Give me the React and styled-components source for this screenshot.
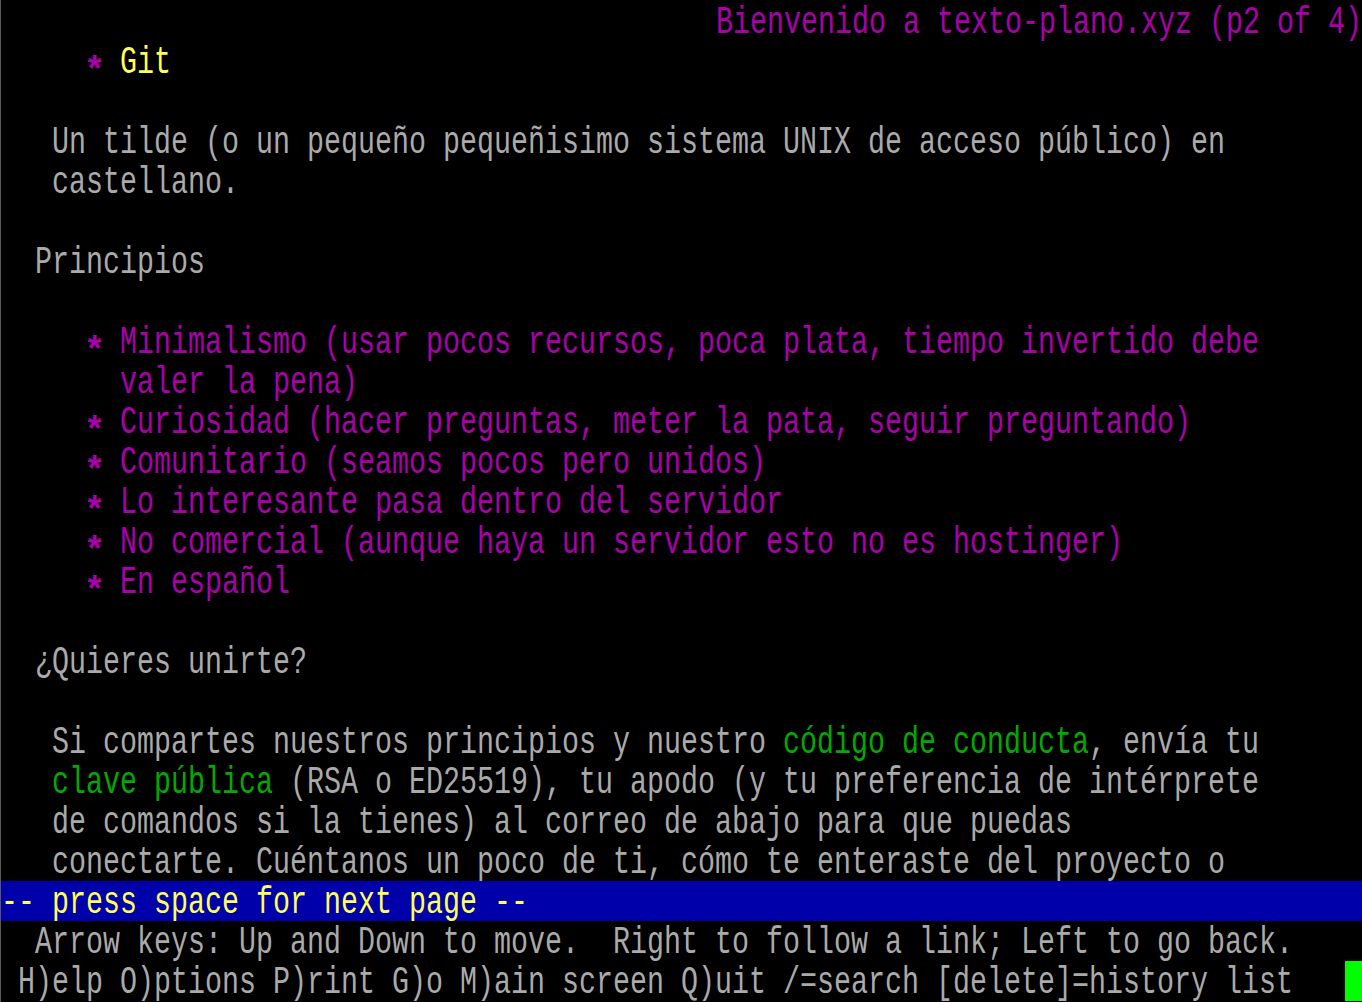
import React from 'react'
import styled, { createGlobalStyle } from 'styled-components'

const Global = createGlobalStyle`
    html, body {
        margin: 0;
        padding: 0;
        background: #000;
    }
`

const colors = {
    gray: '#aaaaaa',
    magenta: '#aa00aa',
    yellow: '#ffff55',
    green: '#00aa00',
}

const Screen = styled.div`
    width: 1362px;
    height: 1002px;
    box-sizing: border-box;
    border-left: 1px solid #5a5a5a;
    background: #000;
    padding-top: 1px;
    display: flex;
    flex-direction: column;
    overflow: hidden;
    font-family: "Liberation Mono", "DejaVu Sans Mono", monospace;
    font-size: 28.33px;
`

const Row = styled.div`
    height: 40px;
    flex: none;
    line-height: 40px;
    white-space: pre;
    display: flex;
    justify-content: ${p => (p.$right ? 'flex-end' : 'flex-start')};
    background: ${p => (p.$bar ? '#0000aa' : 'transparent')};
`

const Text = styled.span`
    display: inline-block;
    transform: translateY(2px) scaleY(1.36);
    color: ${p => colors[p.$c] || colors.gray};
`

// the asterisk sits high in this font, the terminal one is centred and larger
const Bullet = styled(Text)`
    font-weight: bold;
    transform: translateY(12px) scale(1.25, 1.3);
`

const Cursor = styled.span`
    display: inline-block;
    width: 17px;
    height: 40px;
    margin-left: auto;
    background: #00ff00;
`

const item = (text, indent = '     ') => [[indent, 'magenta'], ['*', 'magenta', true], [' ' + text, 'magenta']]

const lines = [
    { right: true, segs: [['Bienvenido a texto-plano.xyz (p2 of 4)', 'magenta']] },
    { segs: [['     ', 'magenta'], ['*', 'magenta', true], [' ', 'magenta'], ['Git', 'yellow']] },
    { segs: [] },
    { segs: [['   Un tilde (o un pequeño pequeñisimo sistema UNIX de acceso público) en']] },
    { segs: [['   castellano.']] },
    { segs: [] },
    { segs: [['  Principios']] },
    { segs: [] },
    { segs: item('Minimalismo (usar pocos recursos, poca plata, tiempo invertido debe') },
    { segs: [['       valer la pena)', 'magenta']] },
    { segs: item('Curiosidad (hacer preguntas, meter la pata, seguir preguntando)') },
    { segs: item('Comunitario (seamos pocos pero unidos)') },
    { segs: item('Lo interesante pasa dentro del servidor') },
    { segs: item('No comercial (aunque haya un servidor esto no es hostinger)') },
    { segs: item('En español') },
    { segs: [] },
    { segs: [['  ¿Quieres unirte?']] },
    { segs: [] },
    { segs: [['   Si compartes nuestros principios y nuestro '], ['código de conducta', 'green'], [', envía tu']] },
    { segs: [['   '], ['clave pública', 'green'], [' (RSA o ED25519), tu apodo (y tu preferencia de intérprete']] },
    { segs: [['   de comandos si la tienes) al correo de abajo para que puedas']] },
    { segs: [['   conectarte. Cuéntanos un poco de ti, cómo te enteraste del proyecto o']] },
    { bar: true, segs: [['-- press space for next page --', 'yellow']] },
    { segs: [['  Arrow keys: Up and Down to move.  Right to follow a link; Left to go back.']] },
    { cursor: true, segs: [[' H)elp O)ptions P)rint G)o M)ain screen Q)uit /=search [delete]=history list']] },
]

const App = () => {
    return (
        <>
            <Global />
            <Screen>
                {lines.map((line, i) => (
                    <Row key={i} $right={line.right} $bar={line.bar}>
                        {line.segs.map(([t, c, bullet], j) =>
                            bullet
                                ? <Bullet key={j} $c={c}>{t}</Bullet>
                                : <Text key={j} $c={c}>{t}</Text>
                        )}
                        {line.cursor && <Cursor />}
                    </Row>
                ))}
            </Screen>
        </>
    )
}

export default App
